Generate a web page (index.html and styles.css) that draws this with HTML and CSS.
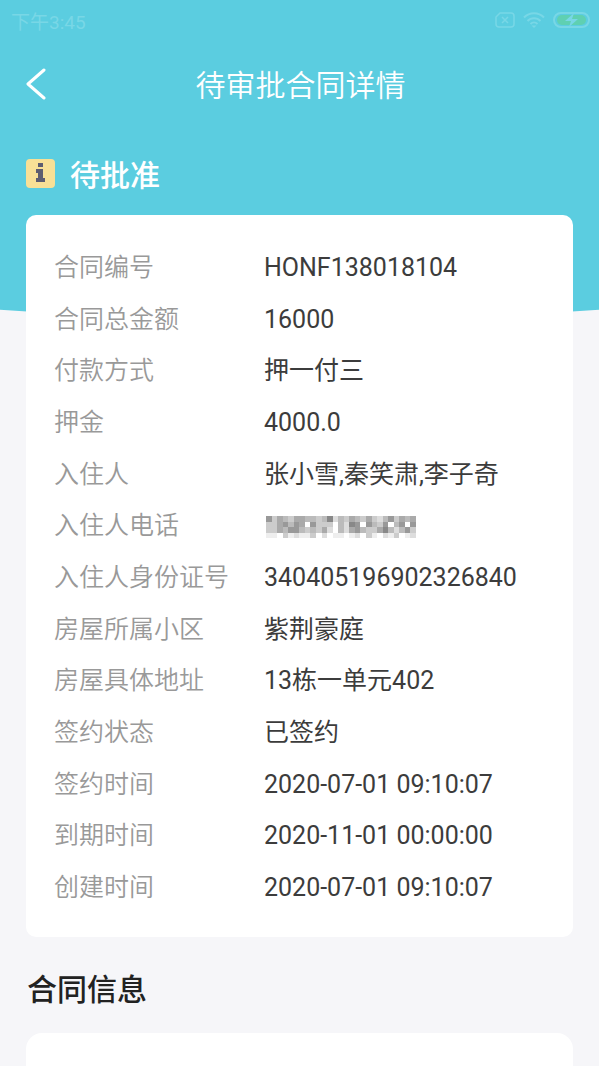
FILE: index.html
```html
<!DOCTYPE html>
<html lang="zh-CN">
<head>
    <meta charset="UTF-8">
    <meta name="viewport" content="width=device-width, initial-scale=1.0">
    <title>待审批合同详情</title>
    <link rel="stylesheet" href="styles.css">
</head>
<body>
    <header class="hero">
        <div class="status-bar">
            <span>下午3:45</span>
            <div class="status-icons">
                <svg width="20" height="16" viewBox="0 0 20 16" fill="none" stroke="currentColor" stroke-width="1.500">
                    <path d="M5 1H16a3 3 0 0 1 3 3V12a3 3 0 0 1-3 3H4a3 3 0 0 1-3-3V5z"/>
                    <path d="M7 5l6 6M13 5l-6 6"/>
                </svg>
                <svg width="22" height="16" viewBox="0 0 22 16" fill="none" stroke="currentColor" stroke-width="2">
                    <path d="M1 5.500a14 14 0 0 1 20 0M4.500 9a9 9 0 0 1 13 0M7.500 12a5 5 0 0 1 7 0"/>
                    <path d="M8.500 13.500h5L11 16z" fill="currentColor" stroke="none"/>
                </svg>
                <svg width="37" height="16" viewBox="0 0 37 16">
                    <rect x="1" y="1" width="35" height="14" rx="7" fill="none" stroke="currentColor" stroke-width="2"/>
                    <rect x="4" y="3" width="29" height="10" rx="5" fill="#5fd0b2"/>
                    <path d="M21 1L12 9h6l-2 6 9-8h-6z" fill="currentColor"/>
                </svg>
            </div>
        </div>
        <nav class="nav-bar">
            <button class="back" type="button" aria-label="返回">
                <svg width="20" height="32" viewBox="0 0 20 32" fill="none" stroke="currentColor" stroke-width="3" stroke-linecap="round" stroke-linejoin="round">
                    <path d="M18 2L2 16L18 30"/>
                </svg>
            </button>
            <h1>待审批合同详情</h1>
        </nav>
        <div class="state">
            <svg width="29" height="29" viewBox="0 0 29 29">
                <rect width="29" height="29" rx="4" fill="#f8e096"/>
                <path d="M12 4h5v4h-5zM10 10h7v9h2v4H10v-4h2v-5h-2z" fill="#5d5d70"/>
            </svg>
            <span>待批准</span>
        </div>
    </header>

    <main>
        <section class="card">
            <dl class="details">
                <div class="row"><dt>合同编号</dt><dd>HONF138018104</dd></div>
                <div class="row"><dt>合同总金额</dt><dd>16000</dd></div>
                <div class="row"><dt>付款方式</dt><dd>押一付三</dd></div>
                <div class="row"><dt>押金</dt><dd>4000.0</dd></div>
                <div class="row"><dt>入住人</dt><dd>张小雪,秦笑肃,李子奇</dd></div>
                <div class="row">
                    <dt>入住人电话</dt>
                    <dd class="masked">
                        <svg id="phoneMask" width="150" height="22" viewBox="0 0 27 4" preserveAspectRatio="none" shape-rendering="crispEdges" role="img" aria-label="电话已隐藏"></svg>
                    </dd>
                </div>
                <div class="row"><dt>入住人身份证号</dt><dd>340405196902326840</dd></div>
                <div class="row"><dt>房屋所属小区</dt><dd>紫荆豪庭</dd></div>
                <div class="row"><dt>房屋具体地址</dt><dd>13栋一单元402</dd></div>
                <div class="row"><dt>签约状态</dt><dd>已签约</dd></div>
                <div class="row"><dt>签约时间</dt><dd>2020-07-01 09:10:07</dd></div>
                <div class="row"><dt>到期时间</dt><dd>2020-11-01 00:00:00</dd></div>
                <div class="row"><dt>创建时间</dt><dd>2020-07-01 09:10:07</dd></div>
            </dl>
        </section>
        <h2>合同信息</h2>
        <section class="card info"></section>
    </main>

    <script>
        // one hex digit per block, used as its grey level
        const blocks = [
            '9cabcaabbcb8dbcabcacdb9caba',
            'cca9b9af9cccfbd89f9bc9fb9f9',
            'ccab99bcbcadfbda9bcca8bdb9c',
            'eefcedeecfdfeefedfcefdecfed'
        ];
        document.getElementById('phoneMask').innerHTML = blocks.map((line, y) =>
            [...line].map((c, x) => `<rect x="${x}" y="${y}" width="1" height="1" fill="#${c}${c}${c}"/>`).join('')
        ).join('');
    </script>
</body>
</html>
```

FILE: styles.css
```css
* { box-sizing: border-box; }
body { margin: 0; background-color: #f6f6f9; font-family: Roboto, "Noto Sans CJK SC", sans-serif; color: #3c3c3c; overflow-x: hidden; }
h1, h2, dl, dd { margin: 0; }
svg { display: block; }

.hero { height: 320px; background-color: #5bcde0; color: #fff; clip-path: ellipse(200% 100% at 50% 0); }
.status-bar { display: flex; justify-content: space-between; align-items: center; height: 40px; padding: 0 9px 0 11px; font-size: 19px; color: #78d7e6; }
.status-icons { display: flex; align-items: center; gap: 8px; }

.nav-bar { display: grid; grid-template-columns: 48px 1fr 48px; align-items: center; height: 88px; padding: 0 22px 0 24px; }
.nav-bar h1 { padding-top: 4px; font-size: 30px; font-weight: 350; line-height: 40px; text-align: center; }
.back { display: flex; padding: 0 2px; border: none; background: none; color: inherit; cursor: pointer; }

.state { display: flex; align-items: center; gap: 15px; height: 90px; padding: 0 26px; font-size: 30px; font-weight: 500; }

main { position: relative; margin-top: -105px; padding: 0 26px; }
.card { padding: 35px 28px 31px; border-radius: 10px; background-color: #fff; }
.details { display: flex; flex-direction: column; justify-content: space-between; min-height: 656px; font-size: 25px; line-height: 36px; }
.row { display: flex; }
.row dt { flex: none; width: 210px; font-weight: 350; color: #999; }
.masked { display: flex; align-items: center; padding: 2px 2px 0; }
main h2 { padding: 32px 1px 22px; font-size: 30px; font-weight: 500; line-height: 42px; color: #222; }
.info { min-height: 34px; border-radius: 16px 16px 0 0; padding: 0; }
```
